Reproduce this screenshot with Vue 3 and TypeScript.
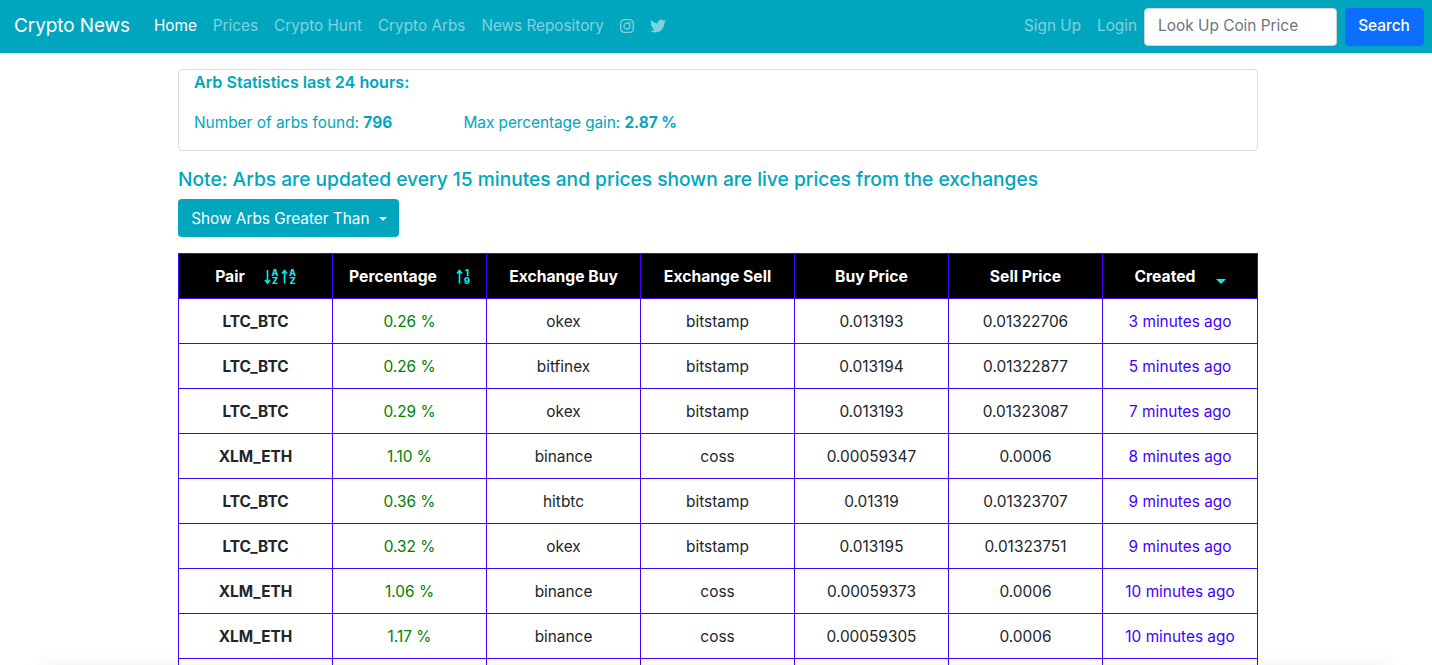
<script setup lang="ts">
interface Arb {
  pair: string
  pct: string
  buy: string
  sell: string
  buyPrice: string
  sellPrice: string
  created: string
}

const navLinks = ['Prices', 'Crypto Hunt', 'Crypto Arbs', 'News Repository']

const arbs: Arb[] = [
  { pair: 'LTC_BTC', pct: '0.26 %', buy: 'okex', sell: 'bitstamp', buyPrice: '0.013193', sellPrice: '0.01322706', created: '3 minutes ago' },
  { pair: 'LTC_BTC', pct: '0.26 %', buy: 'bitfinex', sell: 'bitstamp', buyPrice: '0.013194', sellPrice: '0.01322877', created: '5 minutes ago' },
  { pair: 'LTC_BTC', pct: '0.29 %', buy: 'okex', sell: 'bitstamp', buyPrice: '0.013193', sellPrice: '0.01323087', created: '7 minutes ago' },
  { pair: 'XLM_ETH', pct: '1.10 %', buy: 'binance', sell: 'coss', buyPrice: '0.00059347', sellPrice: '0.0006', created: '8 minutes ago' },
  { pair: 'LTC_BTC', pct: '0.36 %', buy: 'hitbtc', sell: 'bitstamp', buyPrice: '0.01319', sellPrice: '0.01323707', created: '9 minutes ago' },
  { pair: 'LTC_BTC', pct: '0.32 %', buy: 'okex', sell: 'bitstamp', buyPrice: '0.013195', sellPrice: '0.01323751', created: '9 minutes ago' },
  { pair: 'XLM_ETH', pct: '1.06 %', buy: 'binance', sell: 'coss', buyPrice: '0.00059373', sellPrice: '0.0006', created: '10 minutes ago' },
  { pair: 'XLM_ETH', pct: '1.17 %', buy: 'binance', sell: 'coss', buyPrice: '0.00059305', sellPrice: '0.0006', created: '10 minutes ago' },
]
</script>

<template>
  <div class="page">
    <nav class="navbar">
      <a class="brand">Crypto News</a>
      <ul class="links">
        <li class="active">Home</li>
        <li v-for="link in navLinks" :key="link">{{ link }}</li>
        <li class="icon">
          <svg width="14" height="14" viewBox="0 0 14 14" fill="none" stroke="currentColor" stroke-width="1.3">
            <rect x="0.7" y="0.7" width="12.6" height="12.6" rx="3.6" />
            <circle cx="7" cy="7" r="3" />
            <circle cx="10.6" cy="3.4" r="0.8" fill="currentColor" stroke="none" />
          </svg>
        </li>
        <li class="icon">
          <svg width="16" height="14" viewBox="0 0 24 21" fill="currentColor">
            <path d="M23.95 3.07a10 10 0 0 1-2.82.77 4.96 4.96 0 0 0 2.16-2.72c-.95.55-2 .96-3.12 1.19a4.92 4.92 0 0 0-8.38 4.48C7.69 6.6 4.07 4.63 1.64 1.66a4.82 4.82 0 0 0-.67 2.48c0 1.71.87 3.21 2.19 4.1a4.9 4.9 0 0 1-2.23-.62v.06a4.92 4.92 0 0 0 3.95 4.83 4.9 4.9 0 0 1-2.21.08 4.94 4.94 0 0 0 4.6 3.42A9.87 9.87 0 0 1 0 18.04a14 14 0 0 0 7.56 2.21c9.05 0 14-7.5 14-13.98 0-.21 0-.42-.02-.63a9.9 9.9 0 0 0 2.46-2.55z" />
          </svg>
        </li>
      </ul>
      <ul class="links right">
        <li>Sign Up</li>
        <li>Login</li>
      </ul>
      <form class="lookup" @submit.prevent>
        <input type="text" placeholder="Look Up Coin Price" />
        <button type="submit">Search</button>
      </form>
    </nav>

    <main class="content">
      <section class="stats">
        <h6>Arb Statistics last 24 hours:</h6>
        <div class="stat-row">
          <span class="stat">Number of arbs found: <b>796</b></span>
          <span class="stat-max">Max percentage gain: <b>2.87 %</b></span>
        </div>
      </section>

      <h5 class="note">Note: Arbs are updated every 15 minutes and prices shown are live prices from the exchanges</h5>

      <button type="button" class="dropdown">Show Arbs Greater Than <i class="caret"></i></button>

      <table class="arbs">
        <colgroup>
          <col v-for="n in 6" :key="n" class="col" />
          <col />
        </colgroup>
        <thead>
          <tr>
            <th>
              <span>Pair</span>
              <svg class="sort" width="32" height="16" viewBox="0 0 32 16" fill="none" stroke="currentColor">
                <path d="M3.5 1v13M1 11l2.5 3 2.5-3" stroke-width="1.6" />
                <path d="M20.5 14.5V1.5M18 4.5l2.5-3 2.5 3" stroke-width="1.6" />
                <text class="tiny"><tspan x="11" y="6.8">A</tspan><tspan x="11" y="14.5">Z</tspan></text>
                <text class="tiny"><tspan x="28.5" y="6.8">A</tspan><tspan x="28.5" y="14.5">Z</tspan></text>
              </svg>
            </th>
            <th>
              <span>Percentage</span>
              <svg class="sort pct-sort" width="14" height="16" viewBox="0 0 14 16" fill="none" stroke="currentColor">
                <path d="M3.5 14.5V1.5M1 4.5l2.5-3 2.5 3" stroke-width="1.6" />
                <text class="tiny"><tspan x="11" y="6.8">1</tspan><tspan x="11" y="14.5">9</tspan></text>
              </svg>
            </th>
            <th>Exchange Buy</th>
            <th>Exchange Sell</th>
            <th>Buy Price</th>
            <th>Sell Price</th>
            <th>
              <span>Created</span>
              <i class="sort-down"></i>
            </th>
          </tr>
        </thead>
        <tbody>
          <tr v-for="(arb, i) in arbs" :key="i">
            <td class="pair">{{ arb.pair }}</td>
            <td class="pct">{{ arb.pct }}</td>
            <td>{{ arb.buy }}</td>
            <td>{{ arb.sell }}</td>
            <td>{{ arb.buyPrice }}</td>
            <td>{{ arb.sellPrice }}</td>
            <td class="created">{{ arb.created }}</td>
          </tr>
          <!-- la fila siguiente queda cortada por el borde de la ventana -->
          <tr>
            <td v-for="n in 7" :key="n"></td>
          </tr>
        </tbody>
      </table>
    </main>
    <div class="fold-shadow"></div>
  </div>
</template>

<style scoped>
.page {
  height: 665px;
  overflow: hidden;
  position: relative;
  font-family: Inter, Roboto, "Liberation Sans", sans-serif;
  font-size: 16px;
  line-height: 24px;
  color: #212529;
}

.navbar {
  display: flex;
  align-items: center;
  height: 53px;
  box-sizing: border-box;
  padding: 0 8px 2px 14px;
  background: #00a6bd;
}

.brand {
  font-size: 19px;
  letter-spacing: -0.1px;
  color: #fff;
  margin-right: 16px;
}

.links {
  display: flex;
  align-items: center;
  gap: 16px;
  list-style: none;
  margin: 0;
  padding: 0 0 0 8px;
  color: rgba(255, 255, 255, 0.5);
  font-size: 15.3px;
}

.links .active {
  color: #fff;
}

.links .icon {
  display: flex;
  height: 14px;
}

.links.right {
  margin-left: auto;
}

.lookup {
  display: flex;
  gap: 8px;
  margin: 2px 0 0 7px;
}

.lookup input {
  width: 193px;
  height: 38px;
  box-sizing: border-box;
  padding: 4px 13px 6px;
  border: 1px solid #ced4da;
  border-radius: 4px;
  font: inherit;
  font-size: 15.4px;
  background: #fff;
}

.lookup input::placeholder {
  color: #6c757d;
  opacity: 1;
}

.lookup button {
  width: 79px;
  height: 38px;
  padding: 0 1px 2px 0;
  border: 0;
  border-radius: 4px;
  background: #0d6efd;
  color: #fff;
  font: inherit;
  font-size: 15.4px;
  font-weight: 500;
}

.content {
  width: 1080px;
  margin: 16px 0 0 178px;
}

.stats {
  height: 82px;
  box-sizing: border-box;
  padding: 0 15px;
  border: 1px solid #dedede;
  border-radius: 4px;
  color: #00a6bd;
  font-size: 15.4px;
}

.stats h6 {
  margin: 0;
  font-size: 16.1px;
  line-height: 24px;
  font-weight: 600;
}

.stat-row {
  display: flex;
  margin-top: 17px;
  line-height: 24px;
}

.stat {
  width: 269.5px;
}

.stat-max {
  letter-spacing: -0.06px;
}

.stats b {
  font-weight: 700;
}

.note {
  margin: 16px 0 8px;
  color: #00a6bd;
  font-size: 19.18px;
  line-height: 24px;
  font-weight: 500;
}

.dropdown {
  display: block;
  height: 38px;
  width: 221px;
  padding: 2px 0 0 1px;
  border: 0;
  border-radius: 4px;
  background: #00a6bd;
  color: #fff;
  font: inherit;
  font-size: 15.35px;
}

.caret {
  display: inline-block;
  margin-left: 5px;
  vertical-align: 3px;
  border-top: 4.5px solid #fff;
  border-left: 4.5px solid transparent;
  border-right: 4.5px solid transparent;
}

.arbs {
  width: 1080px;
  margin-top: 16px;
  border-collapse: collapse;
  table-layout: fixed;
  font-size: 15.4px;
}

.col {
  width: 154px;
}

.arbs th,
.arbs td {
  height: 45px;
  box-sizing: border-box;
  padding: 2px 0 0;
  border: 1px solid #4400ff;
  text-align: center;
  vertical-align: middle;
}

.arbs th {
  background: #000;
  color: #fff;
  font-size: 15.7px;
  font-weight: 700;
}

.pair {
  font-weight: 700;
}

.pct {
  color: #008000;
}

.created {
  color: #4400ff;
}

.sort {
  margin-left: 19px;
  vertical-align: -3px;
  color: #00f0f0;
  overflow: visible;
}

.pct-sort {
  margin-left: 19px;
}

.tiny {
  font-size: 9px;
  font-weight: 800;
  text-anchor: middle;
  fill: currentColor;
  stroke: none;
}

.sort-down {
  display: inline-block;
  margin-left: 20px;
  vertical-align: -2px;
  border-top: 5px solid #00f0f0;
  border-left: 5px solid transparent;
  border-right: 5px solid transparent;
}

.fold-shadow {
  position: absolute;
  left: 40px;
  right: 40px;
  bottom: -12px;
  height: 12px;
  box-shadow: 0 0 18px rgba(0, 0, 0, 0.07);
}
</style>

<style>
html, body {
  overflow: hidden;
}
</style>
